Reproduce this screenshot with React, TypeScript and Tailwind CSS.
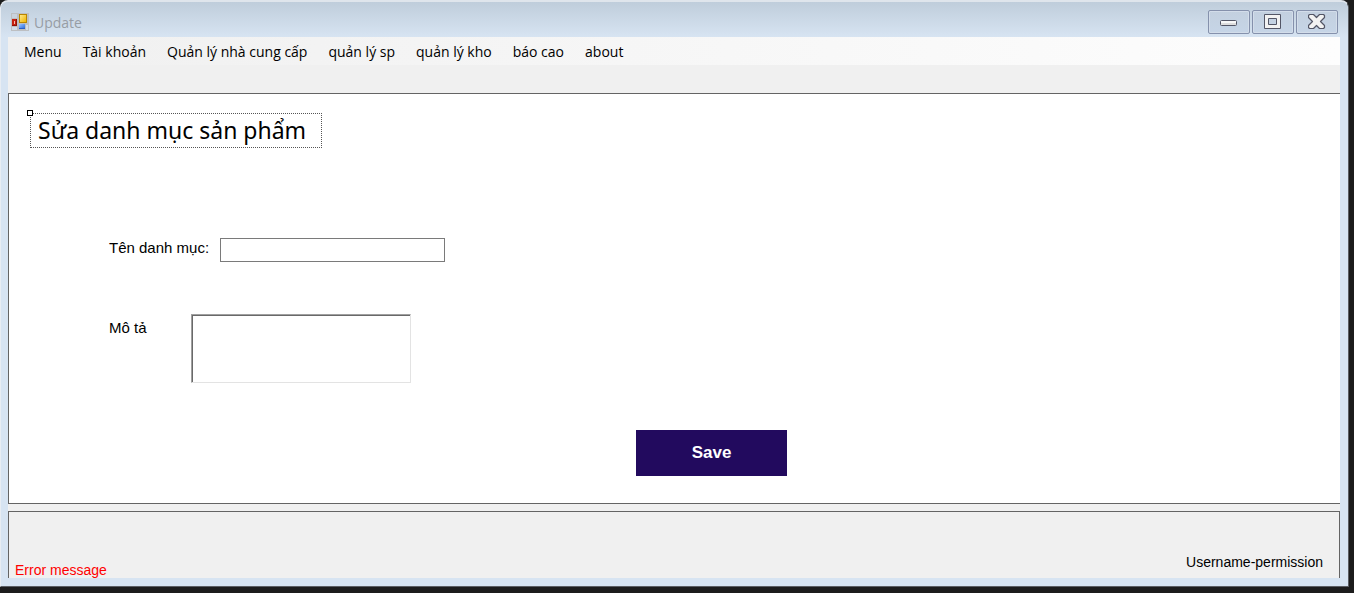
import React from "react";

const menuItems: string[] = [
  "Menu",
  "Tài khoản",
  "Quản lý nhà cung cấp",
  "quản lý sp",
  "quản lý kho",
  "báo cao",
  "about",
];

function FormIcon() {
  return (
    <svg width="18" height="18" viewBox="0 0 18 18" shapeRendering="crispEdges" aria-hidden="true">
      <defs>
        <linearGradient id="gold" x1="0" y1="0" x2="1" y2="1">
          <stop offset="0" stopColor="#ffe98a" />
          <stop offset="1" stopColor="#f0b400" />
        </linearGradient>
        <linearGradient id="blue" x1="0" y1="0" x2="1" y2="1">
          <stop offset="0" stopColor="#9cc4ff" />
          <stop offset="1" stopColor="#2f6fdc" />
        </linearGradient>
      </defs>
      <rect width="18" height="18" fill="#bdbfc2" />
      <rect x="1" y="1" width="5" height="4" fill="#c9d3de" />
      <rect x="1" y="14" width="5" height="3" fill="#d3dde8" />
      <rect x="15" y="12" width="2" height="5" fill="#d3dde8" />
      <rect x="1" y="6" width="5" height="7" fill="#8e1208" />
      <rect x="1" y="6" width="4" height="6" fill="#c5200e" />
      <rect x="3" y="8" width="1" height="3" fill="#f3b3a6" />
      <rect x="8" y="1" width="8" height="9" fill="#b98500" />
      <rect x="9" y="2" width="6" height="7" fill="url(#gold)" />
      <rect x="8" y="11" width="6" height="5" fill="#2a5fc4" />
      <rect x="8" y="11" width="6" height="4" fill="url(#blue)" />
    </svg>
  );
}

function MinimizeIcon() {
  return (
    <svg width="18" height="18" viewBox="0 0 18 18" aria-hidden="true">
      <rect x="0.5" y="7.5" width="16" height="5" rx="1" fill="#f8f8f8" stroke="#535666" />
      <rect x="1" y="10" width="15" height="2" fill="#dedede" />
    </svg>
  );
}

function MaximizeIcon() {
  return (
    <svg width="18" height="18" viewBox="0 0 18 18" aria-hidden="true">
      <path
        d="M0.5 1.5h16v14h-16zM4.5 5.5v6h8v-6z"
        fill="#f2f2f2"
        fillRule="evenodd"
        stroke="#535666"
        strokeLinejoin="round"
      />
    </svg>
  );
}

function CloseIcon() {
  return (
    <svg width="18" height="18" viewBox="0 0 18 18" aria-hidden="true">
      <path
        d="M1.5 1.5H5.5L8.5 4.5L11.5 1.5H15.5L16.5 2.5V4.5L12.5 8.5L16.5 12.5V14.5L15.5 15.5H11.5L8.5 12.5L5.5 15.5H1.5L0.5 14.5V12.5L4.5 8.5L0.5 4.5V2.5Z"
        fill="#f2f2f2"
        stroke="#535666"
        strokeWidth="1.2"
        strokeLinejoin="round"
      />
    </svg>
  );
}

function CaptionButton({ label, children }: { label: string; children: React.ReactNode }) {
  return (
    <button
      type="button"
      aria-label={label}
      className="flex h-6 w-[42px] items-center justify-center rounded-xs border border-[#8591ac] bg-linear-to-b from-[#c3d0df] to-[#c6d5e7] inset-ring inset-ring-[#d3ddea]"
    >
      {children}
    </button>
  );
}

export default function App() {
  return (
    <div className="flex min-h-screen flex-col bg-[#1c1c1c] pr-[5px] pb-[6px] font-['Liberation_Sans',Arial,sans-serif] text-black">
      <div className="flex flex-1 flex-col rounded-t-lg border border-t-2 border-t-[#dfe5ec] border-r-[#5b5e63] border-b-[#5b5e63] border-l-[#e8edf3] bg-[#d7e4f2]">
        <header className="flex h-[35px] items-start justify-between rounded-t-md bg-linear-to-b from-[#bfcddb] to-[#d7e4f2] pr-[10px] pl-[10px]">
          <div className="flex items-start gap-[5px] pt-[11px]">
            <FormIcon />
            <span className="font-['Open_Sans','Noto_Sans',sans-serif] text-sm leading-5 text-[#979da5]">Update</span>
          </div>
          <div className="flex gap-[2px] pt-2">
            <CaptionButton label="Minimize">
              <MinimizeIcon />
            </CaptionButton>
            <CaptionButton label="Maximize">
              <MaximizeIcon />
            </CaptionButton>
            <CaptionButton label="Close">
              <CloseIcon />
            </CaptionButton>
          </div>
        </header>

        <div className="mr-2 mb-2 ml-[7px] flex flex-1 flex-col bg-[#f0f0f0]">
          <nav className="flex h-7 items-center gap-[21px] bg-linear-to-r from-[#f0f0f0] to-[#fdfdfd] pt-[2px] pl-4 font-['Open_Sans','Noto_Sans',sans-serif] text-sm">
            {menuItems.map((item) => (
              <button key={item} type="button" className="whitespace-nowrap">
                {item}
              </button>
            ))}
          </nav>

          <main className="mt-7 flex flex-1 flex-col border-y border-l border-[#646464] bg-white">
            <div className="relative mt-[19px] ml-[21px] flex h-[35px] w-[292px] items-center border border-dotted border-[#555] pl-[7px]">
              <span className="absolute -top-1 -left-1 size-[6px] border border-black bg-white" />
              <h1 className="font-['Noto_Sans',sans-serif] text-[23px] whitespace-nowrap">Sửa danh mục sản phẩm</h1>
            </div>

            <form className="flex flex-1 flex-col pt-[90px] pl-[100px]" onSubmit={(e) => e.preventDefault()}>
              <div className="flex items-start">
                <label htmlFor="category-name" className="w-[111px] text-[15px] leading-5 whitespace-nowrap">
                  Tên danh mục:
                </label>
                <input
                  id="category-name"
                  type="text"
                  className="h-6 w-[225px] border border-[#7a7a7a] bg-white px-1 text-[15px] outline-none"
                />
              </div>

              <div className="mt-[52px] flex items-start">
                <label htmlFor="description" className="w-[82px] pt-1 text-[15px] leading-5">
                  Mô tả
                </label>
                <textarea
                  id="description"
                  className="h-[69px] w-[220px] resize-none border border-t-[#a0a0a0] border-r-[#e3e3e3] border-b-[#e3e3e3] border-l-[#a0a0a0] bg-white p-1 text-[15px] shadow-[inset_1px_1px_0_#696969] outline-none"
                />
              </div>

              <button
                type="submit"
                className="mt-[47px] ml-[527px] h-[46px] w-[151px] bg-[#220a5e] text-[17px] font-bold text-white"
              >
                Save
              </button>
            </form>
          </main>

          <footer className="mt-[7px] flex h-[67px] items-end justify-between border border-b-0 border-[#646464] pr-4 pl-[6px] text-sm leading-4">
            <p className="text-[#ff0000]">Error message</p>
            <p className="pb-2">Username-permission</p>
          </footer>
        </div>
      </div>
    </div>
  );
}
